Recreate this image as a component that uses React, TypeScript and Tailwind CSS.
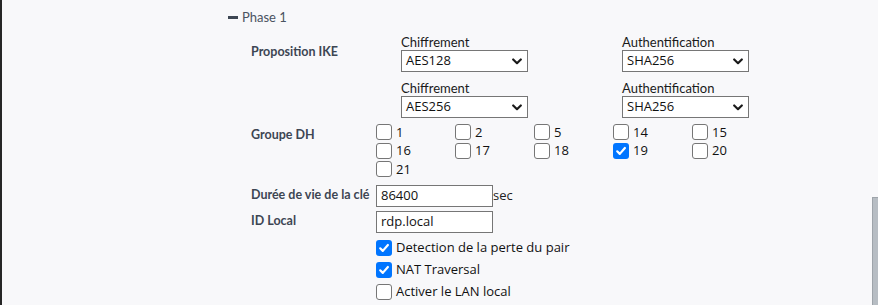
import React from "react";

const ctl = "font-['Open_Sans',sans-serif]";

function Chevron() {
  return (
    <svg width="10" height="7" viewBox="0 0 10 7" className="shrink-0">
      <path d="M1.2 1.5 L5 5.2 L8.8 1.5" fill="none" stroke="#1a1a1a" strokeWidth="2.2" strokeLinecap="round" strokeLinejoin="round" />
    </svg>
  );
}

function Select({ value }: { value: string }) {
  return (
    <div className={`flex h-[22px] w-[127px] items-center justify-between border border-[#767676] bg-white pl-[4px] pr-[5px] text-[13px] text-[#111] ${ctl}`}>
      <span>{value}</span>
      <Chevron />
    </div>
  );
}

function Box({ checked }: { checked?: boolean }) {
  return checked ? (
    <span className="flex h-[16px] w-[16px] shrink-0 items-center justify-center rounded-[3px] bg-[#0075ff]">
      <svg width="12" height="12" viewBox="0 0 12 12">
        <path d="M2.2 6.3 L4.8 8.9 L9.9 3" fill="none" stroke="#fff" strokeWidth="2.2" strokeLinecap="round" strokeLinejoin="round" />
      </svg>
    </span>
  ) : (
    <span className="h-[16px] w-[16px] shrink-0 rounded-[3px] border border-[#767676] bg-white" />
  );
}

function Check({ label, checked }: { label: string; checked?: boolean }) {
  return (
    <div className={`flex items-center gap-[4px] text-[13px] text-[#111] ${ctl}`}>
      <Box checked={checked} />
      <span>{label}</span>
    </div>
  );
}

function Pair({ label, value, first }: { label: string; value: string; first?: boolean }) {
  return (
    <div className={first ? "w-[221px] pt-[8px]" : "w-[221px] pt-[9px]"}>
      <div className="text-[13px] leading-[15px] text-[#1a1a1a]">{label}</div>
      <Select value={value} />
    </div>
  );
}

export default function App() {
  const dh = [
    ["1", false],
    ["2", false],
    ["5", false],
    ["14", false],
    ["15", false],
    ["16", false],
    ["17", false],
    ["18", false],
    ["19", true],
    ["20", false],
    ["21", false],
  ] as const;
  return (
    <div className="relative h-[305px] w-[878px] overflow-hidden border-l-2 border-[#262626] bg-[#f8f8fa] font-['Lato',sans-serif]">
      <div className="pl-[226px] pt-[7px]">
        <div className="flex h-[20px] items-center gap-[4px] text-[13px] leading-[20px] text-[#4a5361]">
          <span className="h-[3px] w-[10px] bg-[#3d4653]" />
          <span>Phase 1</span>
        </div>
        <div className="pl-[23px]">
          {/* Proposition IKE */}
          <div className="flex">
            <div className="w-[150px] pt-[15px] text-[12.5px] font-bold leading-[20px] text-[#3d4653]">Proposition IKE</div>
            <div className="flex flex-col">
              <div className="flex">
                <Pair label="Chiffrement" value="AES128" first />
                <Pair label="Authentification" value="SHA256" first />
              </div>
              <div className="flex">
                <Pair label="Chiffrement" value="AES256" />
                <Pair label="Authentification" value="SHA256" />
              </div>
            </div>
          </div>
          {/* Groupe DH */}
          <div className="mt-[5px] flex">
            <div className="w-[125px] pt-[2px] text-[12.5px] font-bold leading-[20px] text-[#3d4653]">Groupe DH</div>
            <div className="grid w-[395px] grid-cols-5">
              {dh.map(([l, c]) => (
                <div key={l} className="flex h-[18.5px] items-center">
                  <Check label={l} checked={c} />
                </div>
              ))}
            </div>
          </div>
          {/* Durée */}
          <div className="mt-[6px] flex items-center">
            <div className="w-[125px] text-[12.5px] font-bold text-[#3d4653]">Durée de vie de la clé</div>
            <div className={`flex h-[22px] w-[117px] items-center border border-[#767676] bg-white pl-[4px] text-[13px] text-[#111] ${ctl}`}>86400</div>
            <span className={`text-[13px] text-[#222] ${ctl}`}>sec</span>
          </div>
          {/* ID Local */}
          <div className="mt-[4px] flex items-center">
            <div className="w-[125px] text-[12.5px] font-bold text-[#3d4653]">ID Local</div>
            <div className={`flex h-[22px] w-[117px] items-center border border-[#767676] bg-white pl-[4px] text-[13px] text-[#111] ${ctl}`}>rdp.local</div>
          </div>
          <div className="mt-[4.5px] flex flex-col pl-[125px]">
            <div className="flex h-[22px] items-center">
              <Check label="Detection de la perte du pair" checked />
            </div>
            <div className="flex h-[22px] items-center">
              <Check label="NAT Traversal" checked />
            </div>
            <div className="flex h-[22px] items-center">
              <Check label="Activer le LAN local" />
            </div>
          </div>
        </div>
      </div>
      <div className="absolute right-0 top-[197px] h-[108px] w-[6px] border-l border-t border-[#9ea4aa] bg-[#b7bdc3]" />
    </div>
  );
}
